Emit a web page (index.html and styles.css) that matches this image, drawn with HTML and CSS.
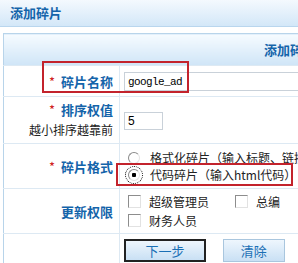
FILE: index.html
```html
<!DOCTYPE html>
<html lang="zh-CN">
<head>
  <meta charset="UTF-8">
  <title>添加碎片</title>
  <link rel="stylesheet" href="styles.css">
</head>
<body>
  <div class="title-bar">添加碎片</div>

  <table class="form-table">
    <tr>
      <th colspan="2" class="table-head">添加碎片</th>
    </tr>
    <tr class="row-name">
      <td class="label"><span class="req">*</span>碎片名称</td>
      <td class="field"><input type="text" class="text-input wide" value="google_ad"></td>
    </tr>
    <tr class="row-order">
      <td class="label">
        <div><span class="req">*</span>排序权值</div>
        <div class="hint">越小排序越靠前</div>
      </td>
      <td class="field"><input type="text" class="text-input short" value="5"></td>
    </tr>
    <tr class="row-format">
      <td class="label"><span class="req">*</span>碎片格式</td>
      <td class="field">
        <div class="option-line"><input type="radio" name="fmt" class="radio">格式化碎片（输入标题、链接、图片等）</div>
        <div class="option-line"><input type="radio" name="fmt" class="radio focused" checked>代码碎片（输入html代码）</div>
      </td>
    </tr>
    <tr class="row-perm">
      <td class="label">更新权限</td>
      <td class="field">
        <div class="check-line">
          <span class="check-item"><input type="checkbox" class="check">超级管理员</span><span class="check-item"><input type="checkbox" class="check">总编</span>
        </div>
        <div class="check-line">
          <span class="check-item"><input type="checkbox" class="check">财务人员</span>
        </div>
      </td>
    </tr>
    <tr class="row-buttons">
      <td class="label"></td>
      <td class="field">
        <button class="btn btn-main">下一步</button>
        <button class="btn">清除</button>
      </td>
    </tr>
  </table>

  <div class="mark mark-name"></div>
  <div class="mark mark-format"></div>
</body>
</html>
```

FILE: styles.css
```css
body {
  margin: 0;
  overflow: hidden;
  background: #fff;
  font-family: "Noto Sans CJK SC", sans-serif;
  font-size: 12px;
  color: #222;
  position: relative;
}

.title-bar {
  height: 26px;
  line-height: 26px;
  padding-left: 10px;
  font-size: 13px;
  font-weight: bold;
  color: #1464aa;
  background: linear-gradient(#f4f9fe, #d3e7f8);
  border-bottom: 1px solid #b9d6ee;
}

.form-table {
  margin: 6px 0 0 3px;
  width: 574px;
  border-collapse: collapse;
  border: 1px solid #b8d4ea;
}
.form-table td { padding: 0; border-top: 1px solid #dde9f3; }

.table-head {
  height: 31px;
  padding: 0;
  font-size: 13px;
  font-weight: bold;
  color: #1464aa;
  background: linear-gradient(#f6fbff, #cfe5f7);
}

.label {
  width: 109px;
  padding-right: 6px !important;
  text-align: right;
  font-size: 13px;
  font-weight: bold;
  color: #1464aa;
  border-right: 1px solid #dde9f3;
  white-space: nowrap;
}
.req { color: #d02020; margin-right: 6px; font-weight: normal; }
.hint { font-size: 12px; font-weight: normal; color: #222; }

.field { padding-left: 4px !important; white-space: nowrap; }

.row-name td { height: 30px; }
.row-order td { height: 46px; }
.row-order .label div { line-height: 20px; }
.row-format td { height: 44px; }
.row-perm td { height: 44px; }
.row-buttons td { height: 30px; vertical-align: top; }

.text-input {
  box-sizing: border-box;
  height: 19px;
  margin: 0;
  padding: 0 3px;
  border: 1px solid #c9d1d9;
  font-family: "Liberation Mono", monospace;
  font-size: 11px;
  letter-spacing: -0.6px;
  color: #000;
}
.wide { width: 320px; }
.short { width: 39px; height: 18px; font-family: "Liberation Sans", sans-serif; font-size: 12px; letter-spacing: 0; }

.option-line { line-height: 17px; display: flex; align-items: center; }
.radio {
  appearance: none;
  width: 12px; height: 12px;
  margin: 0 10px 0 4px;
  border-radius: 50%;
  border: 1px solid #8a8a8a;
  border-right-color: #e4e4e4;
  border-bottom-color: #e4e4e4;
  background: #fff;
  box-sizing: border-box;
}
.radio:checked { background: radial-gradient(circle, #000 0 2px, #fff 2.5px); }
.focused { outline: 1px dotted #000; outline-offset: 2px; }

.check-line { line-height: 19px; display: flex; align-items: center; }
.check-item { display: inline-flex; align-items: center; width: 107px; }
.check {
  appearance: none;
  width: 13px; height: 13px;
  margin: 0 8px 0 4px;
  border: 1px solid #8d8d8d;
  border-right-color: #e2e2e2;
  border-bottom-color: #e2e2e2;
  background: #fff;
  box-sizing: border-box;
}

.btn {
  margin-top: 5px;
  height: 23px;
  width: 62px;
  padding: 0;
  font-family: "Noto Sans CJK SC", sans-serif;
  font-size: 13px;
  color: #1a6fb5;
  background: linear-gradient(#eef6fd, #c9e0f4);
  border: 1px solid #a9c6de;
  margin-right: 15px;
}
.btn-main { width: 82px; border: 2px solid #222; margin-right: 14px; }

.mark { position: absolute; border: 2px solid #c3232c; box-sizing: border-box; }
.mark-name { left: 42px; top: 61px; width: 147px; height: 32px; }
.mark-format { left: 116px; top: 163px; width: 177px; height: 23px; }
```
